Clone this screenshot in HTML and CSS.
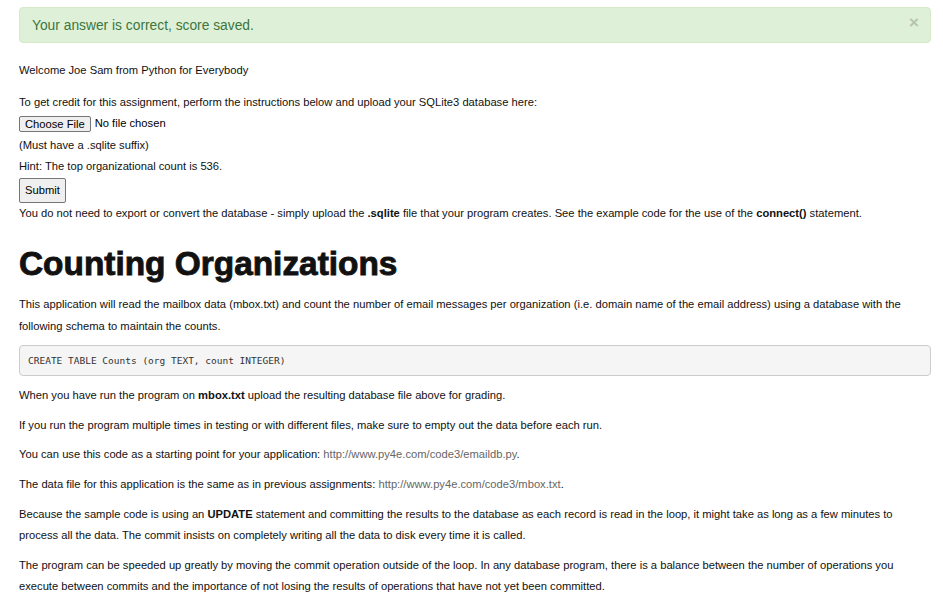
FILE: index.html
```html
<!DOCTYPE html>
<html>
<head>
<meta charset="utf-8">
<title>Counting Organizations</title>
<link rel="stylesheet" href="styles.css">
</head>
<body>
<div class="page">
  <div class="alert">
    <span class="alert-text">Your answer is correct, score saved.</span>
    <span class="close">&times;</span>
  </div>

  <p class="welcome">Welcome Joe Sam from Python for Everybody</p>

  <form class="upload">
    <div class="line">To get credit for this assignment, perform the instructions below and upload your SQLite3 database here:</div>
    <div class="line file-line"><span class="file-btn">Choose File</span><span class="file-name">No file chosen</span></div>
    <div class="line">(Must have a .sqlite suffix)</div>
    <div class="line">Hint: The top organizational count is 536.</div>
    <div class="submit-line"><span class="submit">Submit</span></div>
    <div class="line">You do not need to export or convert the database - simply upload the <b>.sqlite</b> file that your program creates. See the example code for the use of the <b>connect()</b> statement.</div>
  </form>

  <h1 class="title">Counting Organizations</h1>

  <p class="text">This application will read the mailbox data (mbox.txt) and count the number of email messages per organization (i.e. domain name of the email address) using a database with the following schema to maintain the counts.</p>

  <pre class="code">CREATE TABLE Counts (org TEXT, count INTEGER)</pre>

  <p class="text">When you have run the program on <b>mbox.txt</b> upload the resulting database file above for grading.</p>
  <p class="text">If you run the program multiple times in testing or with different files, make sure to empty out the data before each run.</p>
  <p class="text">You can use this code as a starting point for your application: <a class="link" href="#">http://www.py4e.com/code3/emaildb.py</a>.</p>
  <p class="text">The data file for this application is the same as in previous assignments: <a class="link" href="#">http://www.py4e.com/code3/mbox.txt</a>.</p>
  <p class="text">Because the sample code is using an <b>UPDATE</b> statement and committing the results to the database as each record is read in the loop, it might take as long as a few minutes to process all the data. The commit insists on completely writing all the data to disk every time it is called.</p>
  <p class="text">The program can be speeded up greatly by moving the commit operation outside of the loop. In any database program, there is a balance between the number of operations you execute between commits and the importance of not losing the results of operations that have not yet been committed.</p>
</div>
</body>
</html>
```

FILE: styles.css
```css
html, body {
  margin: 0;
  padding: 0;
  background: #fff;
}
body {
  font-family: "Liberation Sans", Arial, sans-serif;
  font-size: 11.2px;
  color: #111;
}
.page {
  padding: 7px 12px 20px 19px;
}
.alert {
  display: flex;
  align-items: center;
  justify-content: space-between;
  height: 34px;
  padding: 0 12px;
  background: #dff0d8;
  border: 1px solid #d6e9c6;
  border-radius: 4px;
  color: #3c763d;
}
.alert-text {
  font-size: 13.8px;
}
.close {
  font-size: 17px;
  font-weight: bold;
  color: #b4c4ae;
  margin-top: -5px;
  margin-right: -1px;
}
.welcome {
  margin: 20px 0 0 0;
  line-height: 14px;
}
.upload {
  margin-top: 15px;
}
.line {
  line-height: 21.4px;
}
.file-line {
  display: flex;
  align-items: center;
  height: 21.4px;
}
.file-btn {
  display: inline-block;
  border: 1px solid #767676;
  background: #efefef;
  border-radius: 2px;
  padding: 0 5px;
  line-height: 14px;
  font-size: 11.2px;
  color: #000;
}
.file-name {
  margin-left: 4px;
  color: #000;
}
.submit-line {
  height: 25px;
}
.submit {
  display: inline-block;
  height: 23px;
  line-height: 23px;
  padding: 0 5px;
  border: 1px solid #767676;
  background: #efefef;
  border-radius: 2px;
  color: #000;
  font-size: 11.2px;
}
.title {
  margin: 18px 0 0 0;
  font-size: 33.4px;
  line-height: 44px;
  font-weight: bold;
  -webkit-text-stroke: 0.9px #111;
  color: #111;
}
.text {
  margin: 0 0 8px 0;
  line-height: 21.6px;
}
.title + .text {
  margin-top: 8px;
}
.code {
  margin: 0 0 9px 0;
  padding: 0 8px;
  height: 29px;
  line-height: 29px;
  background: #f5f5f5;
  border: 1px solid #ccc;
  border-radius: 4px;
  font-family: "DejaVu Sans Mono", "Liberation Mono", monospace;
  font-size: 9.5px;
  color: #333;
}
.link {
  color: #666;
  text-decoration: none;
}
```
